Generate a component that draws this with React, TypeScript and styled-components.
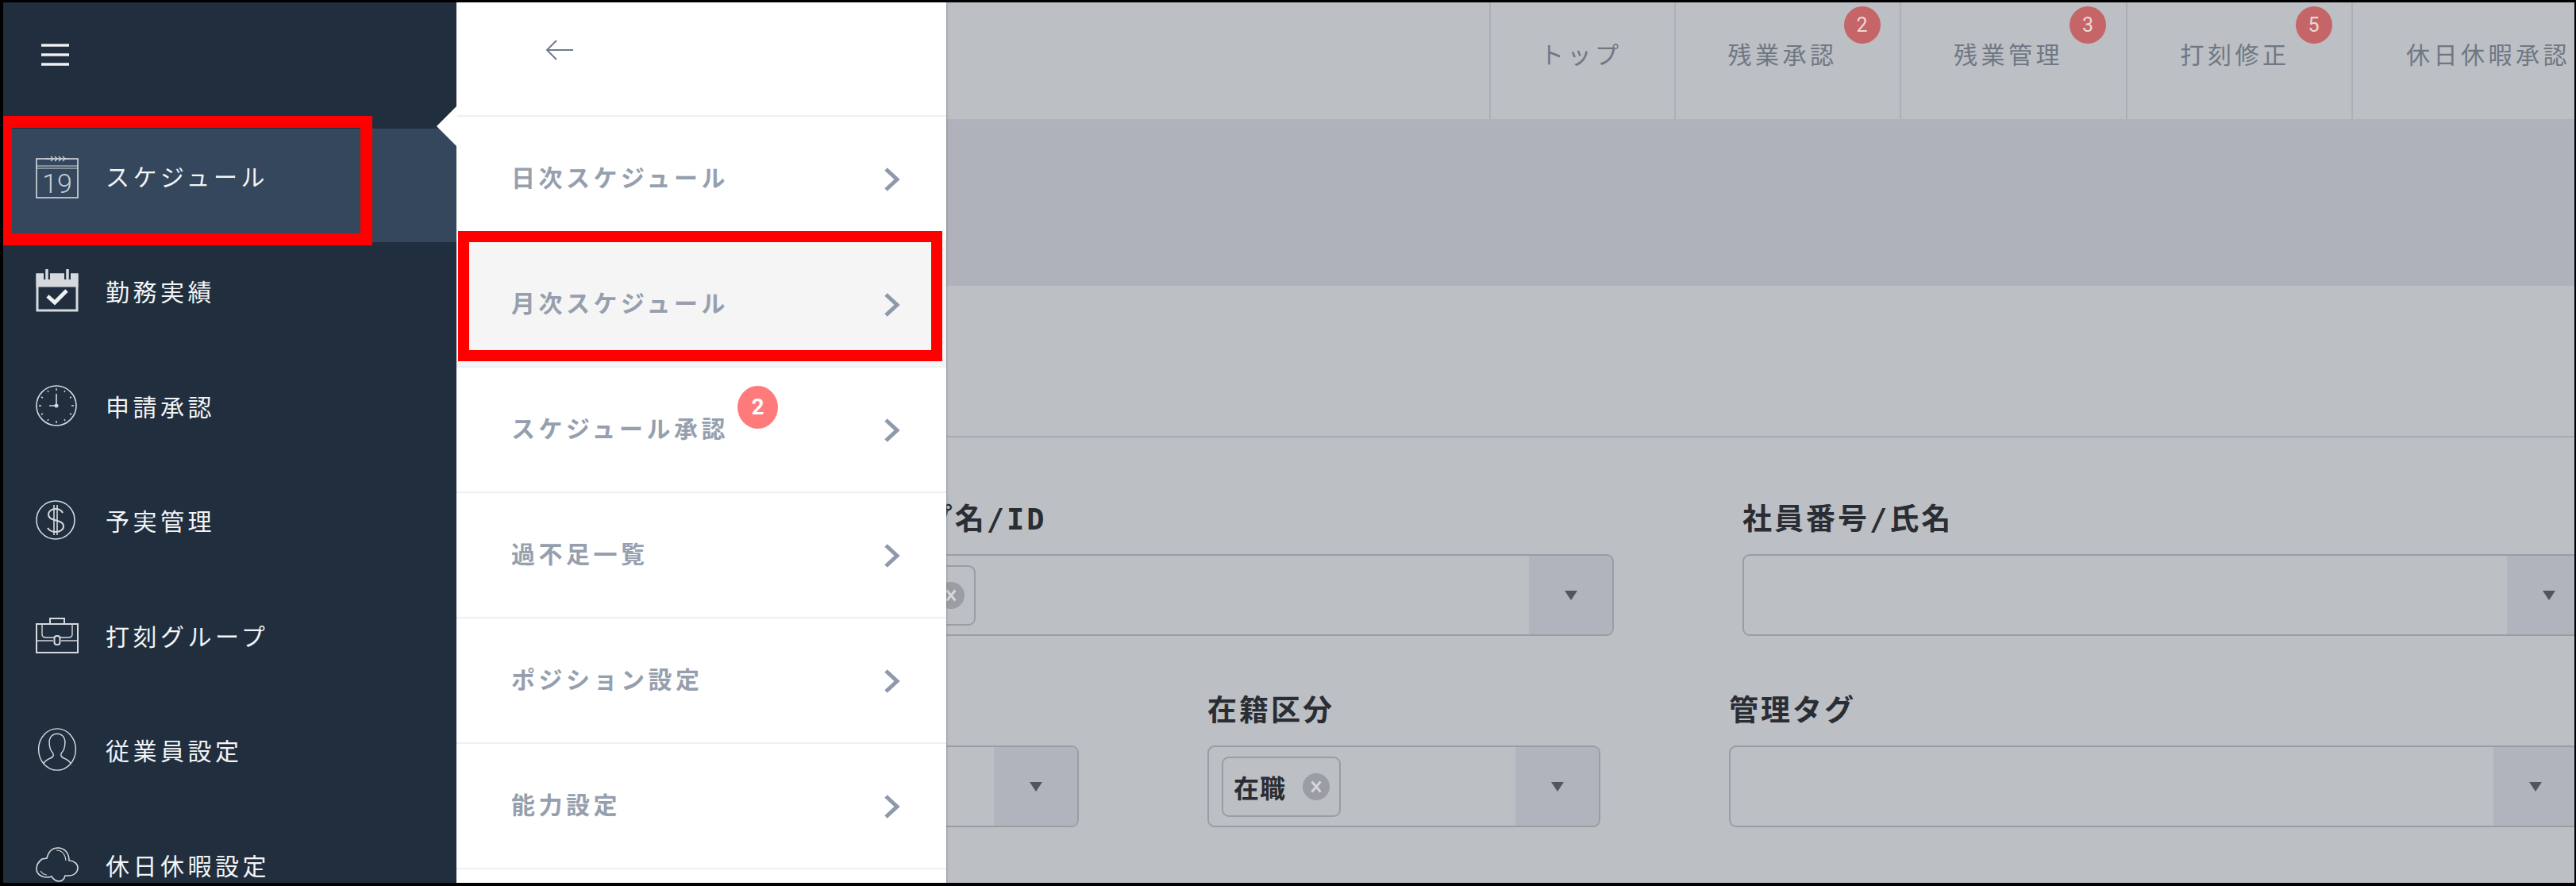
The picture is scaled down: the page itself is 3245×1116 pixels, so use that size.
import React, { FC } from "react";
import styled, { createGlobalStyle } from "styled-components";

const GlobalStyle = createGlobalStyle`
  html, body {
    margin: 0;
    padding: 0;
    background: #000;
  }
  * {
    box-sizing: border-box;
  }
`;

const FONT = `"Noto Sans CJK JP", "Noto Sans", sans-serif`;

const Frame = styled.div`
  position: relative;
  display: flex;
  width: 3245px;
  height: 1116px;
  border-style: solid;
  border-color: #000;
  border-width: 3px 2px 4px 4px;
  overflow: hidden;
  font-family: ${FONT};
`;

/* ---------- dark side navigation ---------- */

const Sidebar = styled.nav`
  flex: 0 0 571px;
  background: #202e3e;
  color: #f2f4f6;
  overflow: hidden;
`;

const MenuTop = styled.div`
  height: 159px;
  padding: 52px 0 0 48px;
`;

const NavItem = styled.div<{ $active?: boolean }>`
  display: flex;
  align-items: center;
  gap: 34px;
  height: ${(p) => (p.$active ? 143 : 144.5)}px;
  padding: 0 0 22px 41px;
  background: ${(p) => (p.$active ? "#34475d" : "transparent")};
`;

const NavIcon = styled.svg`
  flex: 0 0 54px;
  width: 54px;
  height: 54px;
  fill: none;
  stroke: #d5d9dd;
  stroke-width: 1.6;
`;

const NavLabel = styled.span<{ $active?: boolean }>`
  margin-top: ${(p) => (p.$active ? -3 : 0)}px;
  font-size: 30px;
  letter-spacing: 4.5px;
  line-height: 40px;
  white-space: nowrap;
`;

/* ---------- white sub menu ---------- */

const SubMenu = styled.aside`
  position: relative;
  z-index: 2;
  flex: 0 0 617px;
  background: #fff;
  box-shadow: 1px 0 2px rgba(90, 95, 105, 0.45);

  &::before {
    content: "";
    position: absolute;
    left: -25px;
    top: 130px;
    width: 26px;
    height: 52px;
    background: #fff;
    clip-path: polygon(0 50%, 100% 0, 100% 100%);
  }
`;

const SubHeader = styled.div`
  display: flex;
  align-items: center;
  height: 144px;
  padding: 0 0 22px 112px;
  border-bottom: 2px solid #eef0f4;
`;

const SubItem = styled.div<{ $hover?: boolean }>`
  position: relative;
  display: flex;
  align-items: center;
  justify-content: space-between;
  height: 158px;
  padding: 0 58px 0 69px;
  border-bottom: 2px solid #eef0f4;
  background: ${(p) => (p.$hover ? "#f5f5f5" : "#fff")};
`;

const SubLabel = styled.span`
  margin-top: -6px;
  font-size: 30px;
  font-weight: 700;
  letter-spacing: 4.5px;
  line-height: 40px;
  color: #969fae;
  white-space: nowrap;
`;

const Chevron = styled.svg`
  width: 21px;
  height: 30px;
  margin-top: 1px;
  fill: none;
  stroke: #8e99ab;
  stroke-width: 5;
`;

const SubBadge = styled.span`
  position: absolute;
  left: 354px;
  top: 23px;
  width: 51px;
  height: 54px;
  border-radius: 50%;
  background: #ff7b7b;
  color: #fff;
  font-family: "Roboto", sans-serif;
  font-size: 28px;
  font-weight: 700;
  line-height: 54px;
  text-align: center;
`;

/* ---------- dimmed page behind the menu ---------- */

const Main = styled.main`
  flex: 1;
  min-width: 0;
  background: #bcbfc4;
  overflow: hidden;
`;

const TopBar = styled.header`
  display: flex;
  height: 150px;
  padding-left: 684px;
  border-bottom: 3px solid #b0b3bb;
`;

const Tab = styled.div<{ $w: number; $pad: number }>`
  position: relative;
  flex: 0 0 ${(p) => p.$w}px;
  height: 147px;
  padding: 0 0 19px ${(p) => p.$pad}px;
  border-left: 2px solid #abafb8;
  display: flex;
  align-items: center;
  font-size: 30px;
  letter-spacing: 4.5px;
  color: #6f7783;
  white-space: nowrap;
`;

const TabBadge = styled.span`
  position: absolute;
  left: 212px;
  top: 5px;
  width: 46px;
  height: 47px;
  border-radius: 50%;
  background: #c66567;
  color: #ead9da;
  font-family: "Roboto", sans-serif;
  font-size: 25px;
  line-height: 47px;
  text-align: center;
  letter-spacing: 0;
`;

const Band = styled.div`
  height: 207px;
  background: #afb2ba;
`;

const Intro = styled.div`
  height: 191px;
  border-bottom: 2px solid #a6a9b0;
`;

const Form = styled.div`
  padding-top: 80px;
`;

const Row = styled.div<{ $shift: number }>`
  display: flex;
  gap: 162px;
  margin-left: ${(p) => p.$shift}px;
  margin-bottom: 71px;
`;

const Field = styled.div<{ $w: number }>`
  flex: 0 0 ${(p) => p.$w}px;
`;

const FieldLabel = styled.div`
  height: 44px;
  margin-bottom: 23px;
  font-family: "DejaVu Sans Mono", "Noto Sans CJK JP", monospace;
  font-size: 37px;
  font-weight: 700;
  letter-spacing: 3px;
  line-height: 48px;
  color: #2a2d33;
  white-space: nowrap;
`;

const SelectBox = styled.div`
  display: flex;
  align-items: center;
  height: 103px;
  padding-left: 16px;
  border: 2px solid #9a9da3;
  border-radius: 9px;
`;

const Chip = styled.div<{ $w: number }>`
  display: flex;
  align-items: center;
  width: ${(p) => p.$w}px;
  height: 76px;
  padding: 0 12px 0 13px;
  border: 2px solid #9a9da3;
  border-radius: 9px;
  font-size: 32px;
  font-weight: 700;
  letter-spacing: 1px;
  color: #2a2d33;
  white-space: nowrap;
`;

const ChipClose = styled.svg`
  width: 34px;
  height: 34px;
  margin-left: auto;
`;

const SelectButton = styled.div`
  display: flex;
  align-items: center;
  justify-content: center;
  align-self: stretch;
  flex: 0 0 105px;
  margin-left: auto;
  border-radius: 0 7px 7px 0;
  background: #b1b4bc;

  &::after {
    content: "";
    border-style: solid;
    border-width: 12px 8px 0;
    border-color: #50555f transparent transparent;
  }
`;

/* red marks laid over the screenshot */
const RedMark = styled.div<{ $x: number; $y: number; $w: number; $h: number; $bw: number }>`
  position: absolute;
  z-index: 5;
  left: ${(p) => p.$x}px;
  top: ${(p) => p.$y}px;
  width: ${(p) => p.$w}px;
  height: ${(p) => p.$h}px;
  border-style: solid;
  border-color: #ff0000;
  border-width: ${(p) => p.$bw}px;
  pointer-events: none;
`;

/* ---------- icons ---------- */

const IconCalendar = () => (
  <NavIcon viewBox="0 0 54 54">
    <rect x="1" y="4" width="52" height="49" />
    <path d="M1 13h52M1 16h52" strokeWidth="1" />
    <path d="M12 4h6M42 4h-6M19 1l3 3-3 3M24 1l3 3-3 3M29 1l3 3-3 3M34 1l3 3-3 3" strokeWidth="1.2" />
    <text x="27" y="47" textAnchor="middle" fontSize="34" fontFamily="Roboto" fontWeight="300" fill="#c9ced4" stroke="none">
      19
    </text>
  </NavIcon>
);

const IconCheck = () => (
  <NavIcon viewBox="0 0 54 54">
    <path d="M2 7h50v45H2z" strokeWidth="3" />
    <path d="M2 7h50v14H2z" fill="#d5d9dd" stroke="#d5d9dd" strokeWidth="3" />
    <path d="M14 1v12M40 1v12" stroke="#202e3e" strokeWidth="8" />
    <path d="M14 1v11M40 1v11" strokeWidth="3.5" strokeLinecap="round" />
    <path d="M15 34l9 8 15-15" strokeWidth="5" stroke="#eef0f2" />
  </NavIcon>
);

const IconClock = () => (
  <NavIcon viewBox="0 0 54 54">
    <circle cx="26" cy="27" r="25" />
    <path d="M26 12v15h-9" strokeWidth="1.6" />
    <circle cx="26" cy="27" r="2.5" fill="#d5d9dd" stroke="none" />
    <path
      d="M26 5v3M26 46v3M4 27h3M45 27h3M15 8l1 2M37 8l-1 2M15 46l1-2M37 46l-1-2M7 16l2 1M45 16l-2 1M7 38l2-1M45 38l-2-1"
      strokeWidth="1.4"
    />
  </NavIcon>
);

const IconDollar = () => (
  <NavIcon viewBox="0 0 54 54">
    <circle cx="25" cy="27" r="24" />
    <path d="M34 18c-2-4-6-5-9-5-5 0-9 3-9 7 0 10 19 5 19 15 0 4-4 7-10 7-4 0-8-2-10-5" strokeWidth="2" />
    <path d="M23 8v38M27 8v38" strokeWidth="1.6" />
  </NavIcon>
);

const IconBriefcase = () => (
  <NavIcon viewBox="0 0 54 46">
    <path d="M18 9V2h18v7" strokeWidth="2" />
    <rect x="1" y="9" width="52" height="36" strokeWidth="2" />
    <path d="M8 9v13c0 3 2 4 5 4h10M46 9v13c0 3-2 4-5 4H31M2 30h20M32 30h20" strokeWidth="1.4" />
    <rect x="23.5" y="24" width="7" height="11" rx="3" strokeWidth="2" />
  </NavIcon>
);

const IconUser = () => (
  <NavIcon viewBox="0 0 54 60">
    <ellipse cx="27" cy="30" rx="26" ry="29" />
    <path d="M21 35c-3-3-5-9-5-15 0-8 5-12 11-12s11 4 11 12c0 6-2 12-5 15-2 4 0 6 5 8 4 2 7 4 8 7M21 35c2 4 0 6-5 8-4 2-7 4-8 7" />
  </NavIcon>
);

const IconCloud = () => (
  <NavIcon viewBox="0 0 54 44">
    <path d="M14 14c2-8 7-13 14-13 8 0 14 6 14 16 6 0 11 4 11 9 0 6-5 10-11 10h-5c-1 4-4 7-8 7s-7-3-9-6c-2 1-4 1-6 1-7 0-13-4-13-11 0-5 3-9 7-12z" />
    <path d="M26 4c7 0 11 5 12 13M6 30c2 3 5 5 8 5" strokeWidth="1.2" />
  </NavIcon>
);

const Hamburger = () => (
  <svg width="36" height="28" viewBox="0 0 36 28" stroke="#eef0f2" strokeWidth="3.4">
    <path d="M0 2h35M0 14h35M0 26h35" />
  </svg>
);

const BackArrow = () => (
  <svg width="36" height="26" viewBox="0 0 36 26" fill="none" stroke="#6f7b8f" strokeWidth="2">
    <path d="M35 13H3M14 1L2 13l12 12" />
  </svg>
);

const SubChevron = () => (
  <Chevron viewBox="0 0 21 30">
    <path d="M3 2l14 13L3 28" />
  </Chevron>
);

const CloseIcon = () => (
  <ChipClose viewBox="0 0 34 34">
    <circle cx="17" cy="17" r="17" fill="#9a9da3" />
    <path d="M11.5 10.5l11 13M22.5 10.5l-11 13" stroke="#d5d7da" strokeWidth="3" />
  </ChipClose>
);

/* ---------- data ---------- */

const NAV_ITEMS = [
  { label: "スケジュール", icon: <IconCalendar />, active: true },
  { label: "勤務実績", icon: <IconCheck /> },
  { label: "申請承認", icon: <IconClock /> },
  { label: "予実管理", icon: <IconDollar /> },
  { label: "打刻グループ", icon: <IconBriefcase /> },
  { label: "従業員設定", icon: <IconUser /> },
  { label: "休日休暇設定", icon: <IconCloud /> },
];

const SUB_ITEMS = [
  { label: "日次スケジュール" },
  { label: "月次スケジュール", hover: true },
  { label: "スケジュール承認", badge: 2 },
  { label: "過不足一覧" },
  { label: "ポジション設定" },
  { label: "能力設定" },
];

const TABS = [
  { label: "トップ", w: 232.5, pad: 62 },
  { label: "残業承認", w: 284.5, pad: 66, badge: 2 },
  { label: "残業管理", w: 284.5, pad: 66, badge: 3 },
  { label: "打刻修正", w: 284.5, pad: 67, badge: 5 },
  { label: "休日休暇承認", w: 360, pad: 67 },
];

type SelectProps = {
  chip?: string;
  chipWidth?: number;
};

const Select: FC<SelectProps> = ({ chip, chipWidth }: SelectProps) => (
  <SelectBox>
    {chipWidth && (
      <Chip $w={chipWidth}>
        {chip}
        <CloseIcon />
      </Chip>
    )}
    <SelectButton />
  </SelectBox>
);

const App: FC = () => {
  return (
    <>
      <GlobalStyle />
      <Frame>
        <Sidebar>
          <MenuTop>
            <Hamburger />
          </MenuTop>
          {NAV_ITEMS.map((item) => (
            <NavItem key={item.label} $active={item.active}>
              {item.icon}
              <NavLabel $active={item.active}>{item.label}</NavLabel>
            </NavItem>
          ))}
        </Sidebar>

        <SubMenu>
          <SubHeader>
            <BackArrow />
          </SubHeader>
          {SUB_ITEMS.map((item) => (
            <SubItem key={item.label} $hover={item.hover}>
              <SubLabel>{item.label}</SubLabel>
              {item.badge && <SubBadge>{item.badge}</SubBadge>}
              <SubChevron />
            </SubItem>
          ))}
        </SubMenu>

        <Main>
          <TopBar>
            {TABS.map((tab) => (
              <Tab key={tab.label} $w={tab.w} $pad={tab.pad}>
                {tab.label}
                {tab.badge && <TabBadge>{tab.badge}</TabBadge>}
              </Tab>
            ))}
          </TopBar>
          <Band />
          <Intro />
          <Form>
            <Row $shift={-147}>
              <Field $w={988}>
                <FieldLabel>グループ名/ID</FieldLabel>
                <Select chipWidth={166} />
              </Field>
              <Field $w={1070}>
                <FieldLabel>社員番号/氏名</FieldLabel>
                <Select />
              </Field>
            </Row>
            <Row $shift={-323}>
              <Field $w={490}>
                <FieldLabel />
                <Select />
              </Field>
              <Field $w={495}>
                <FieldLabel>在籍区分</FieldLabel>
                <Select chip="在職" chipWidth={150} />
              </Field>
              <Field $w={1070}>
                <FieldLabel>管理タグ</FieldLabel>
                <Select />
              </Field>
            </Row>
          </Form>
        </Main>

        <RedMark $x={-4} $y={143} $w={469} $h={163} $bw={15} />
        <RedMark $x={573} $y={288} $w={610} $h={164} $bw={14} />
      </Frame>
    </>
  );
};

export default App;
